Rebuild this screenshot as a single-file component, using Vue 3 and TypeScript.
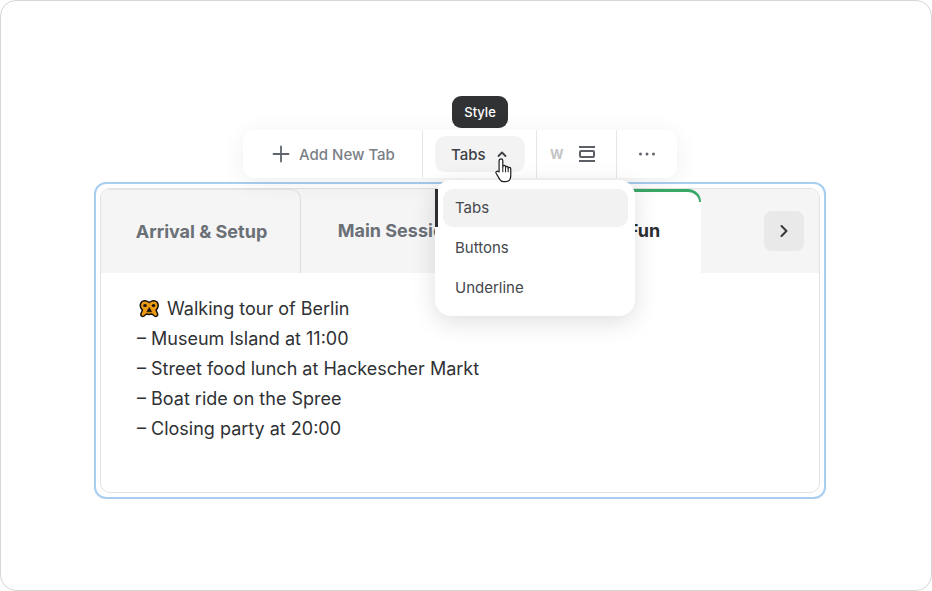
<script setup lang="ts">
const tabs = ['Arrival & Setup', 'Main Sessions', 'Games & Fun']
const lines = ['– Museum Island at 11:00', '– Street food lunch at Hackescher Markt', '– Boat ride on the Spree', '– Closing party at 20:00']
const options = ['Tabs', 'Buttons', 'Underline']
</script>

<template>
  <div class="frame">
    <section class="editor">
      <div class="panel">
        <div class="tabbar">
          <div v-for="(t, i) in tabs" :key="t" class="tab" :class="{ first: i === 0, active: i === 2 }">{{ t }}</div>
          <button class="next" aria-label="Next">
            <svg width="12" height="14" viewBox="0 0 12 14"><path d="M3.500 2 8.500 7l-5 5" fill="none" stroke="#333538" stroke-width="2" stroke-linecap="round" stroke-linejoin="round"/></svg>
          </button>
        </div>
        <div class="content">
          <p>
            <svg class="pretzel" width="21" height="19" viewBox="0 0 21 19" aria-hidden="true">
              <path d="M10.250 3.500C8 1.500 4.500.8 2.500 3 .5 5.500 1 9 3.500 11L1.800 15C1.500 17 3.500 18 5 17L7.500 15C9 15.500 11.500 15.500 13 15L15.500 17C17 18 19 17 18.700 15L17 11C19.500 9 20 5.500 18 3 16 .8 12.500 1.500 10.250 3.500Z" fill="#eb9a12" stroke="#17130c" stroke-width="1.500" stroke-linejoin="round"/>
              <ellipse cx="6" cy="6.500" rx="1.800" ry="1.600" fill="#17130c"/>
              <ellipse cx="14.500" cy="6.500" rx="1.800" ry="1.600" fill="#17130c"/>
              <path d="M10.250 8.500 7.800 12.800h4.900Z" fill="#17130c" stroke="#17130c" stroke-width=".6" stroke-linejoin="round"/>
            </svg><span>Walking tour of Berlin</span>
          </p>
          <p v-for="l in lines" :key="l">{{ l }}</p>
        </div>
      </div>
    </section>

    <div class="tooltip">Style</div>

    <div class="toolbar">
      <div class="group add">
        <svg width="18" height="18" viewBox="0 0 18 18"><path d="M9 1.500v15M1.500 9h15" fill="none" stroke="#60656c" stroke-width="1.800" stroke-linecap="round"/></svg>
        <span>Add New Tab</span>
      </div>
      <div class="group style">
        <div class="pill">
          <span>Tabs</span>
          <svg width="12" height="8" viewBox="0 0 12 8"><path d="M2.500 6 6 2.500 9.500 6" fill="none" stroke="#3d4044" stroke-width="1.800" stroke-linecap="round" stroke-linejoin="round"/></svg>
        </div>
      </div>
      <div class="group view">
        <span class="w">W</span>
        <svg width="16" height="16" viewBox="0 0 16 16" fill="none" stroke="#5c6066" stroke-width="2"><path d="M0 1h16M0 15h16"/><rect x="1" y="5" width="14" height="6" rx="1"/></svg>
      </div>
      <div class="group more">
        <svg width="18" height="4" viewBox="0 0 18 4" fill="#60656c"><circle cx="2.500" cy="2" r="1.500"/><circle cx="9" cy="2" r="1.500"/><circle cx="15.500" cy="2" r="1.500"/></svg>
      </div>
    </div>

    <div class="menu">
      <i class="marker"></i>
      <div v-for="(o, i) in options" :key="o" class="option" :class="{ selected: i === 0 }">{{ o }}</div>
    </div>

    <svg class="cursor" width="18" height="25" viewBox="0 0 19 27">
      <path d="M4.200 15V3a2 2 0 0 1 4 0V10V9.500a1.500 1.500 0 0 1 3 0v1a1.400 1.400 0 0 1 2.800 0v1a1.400 1.400 0 0 1 2.800 0V19c0 3.800-2 6.500-5.500 6.500H9c-2 0-3.200-.8-4.300-2.700L1 16.500c-.9-1.700 1.200-3.200 2.400-1.900z" fill="#fff" stroke="#1b1c1e" stroke-width="1.300" stroke-linejoin="round"/>
      <path d="M8.200 10v5.500M11.200 10.500v5M14 11.500v4" fill="none" stroke="#1b1c1e" stroke-width="1.100"/>
    </svg>
  </div>
</template>

<style>
html, body { margin: 0; background: #fff; }
</style>

<style scoped>
.frame {
  position: relative;
  box-sizing: border-box;
  width: 932px;
  height: 591px;
  padding: 181px 105px 0 93px;
  background: #fff;
  border: 1px solid #d6d6d6;
  border-radius: 16px;
  font-family: Inter, "Noto Sans", sans-serif;
  overflow: hidden;
}
.editor {
  box-sizing: border-box;
  height: 317px;
  padding: 4px;
  border: 2px solid #a8cef1;
  border-radius: 12px;
}
.panel {
  box-sizing: border-box;
  height: 100%;
  border: 1px solid #e2e2e2;
  border-radius: 10px;
  overflow: hidden;
}
.tabbar {
  display: flex;
  height: 84px;
  background: #f5f5f5;
  align-items: stretch;
}
.tab {
  position: relative;
  box-sizing: border-box;
  width: 200px;
  padding: 0 0 1px 2px;
  display: flex;
  align-items: center;
  justify-content: center;
  font-size: 18px;
  font-weight: 700;
  color: #6b7077;
  border-right: 1px solid #dcdcdc;
}
.tab.first { border-top-right-radius: 10px; border-top: 1px solid #e5e5e5; }
.tab.active {
  padding-left: 4px;
  background: #fff;
  color: #2b2d30;
  border-right: 0;
  border-top-right-radius: 14px;
  border-top-left-radius: 14px;
}
.tab.active::before {
  content: "";
  position: absolute;
  top: 0;
  left: 0;
  right: 0;
  height: 13px;
  box-sizing: border-box;
  border-top: 3px solid #3aa968;
  border-right: 2px solid #3aa968;
  border-top-right-radius: 14px;
}
.next {
  margin: 22px 0 0 63px;
  width: 40px;
  height: 40px;
  padding: 0;
  border: 0;
  border-radius: 8px;
  background: #e9e9e9;
  display: flex;
  align-items: center;
  justify-content: center;
}
.content {
  padding: 21px 37px 0 36px;
  font-size: 18px;
  line-height: 30px;
  color: #2f3134;
}
.content p { margin: 0; }
.pretzel {
  margin: 0 7px 0 2px;
  vertical-align: -3px;
}

.tooltip {
  position: absolute;
  left: 451px;
  top: 95px;
  width: 56px;
  height: 32px;
  display: flex;
  align-items: center;
  justify-content: center;
  background: #303234;
  color: #fff;
  border-radius: 9px;
  font-size: 13px;
  font-weight: 500;
}
.toolbar {
  position: absolute;
  left: 242px;
  top: 129px;
  width: 434px;
  height: 48px;
  display: flex;
  background: #fff;
  border-radius: 12px;
  box-shadow: 0 4px 24px rgba(0, 0, 0, .07);
}
.group {
  box-sizing: border-box;
  display: flex;
  align-items: center;
  border-right: 1px solid #e6e6e6;
}
.group:last-child { border-right: 0; }
.add { width: 180px; padding-left: 29px; gap: 9px; font-size: 15px; font-weight: 500; color: #7b8087; }
.style { width: 114px; padding-left: 12px; }
.pill {
  width: 90px;
  height: 36px;
  box-sizing: border-box;
  padding-left: 16px;
  display: flex;
  align-items: center;
  gap: 10px;
  background: #f3f3f3;
  border-radius: 10px;
  font-size: 15px;
  font-weight: 500;
  color: #3d4044;
}
.view { width: 80px; padding-left: 13px; gap: 15px; }
.w { font-size: 13px; font-weight: 700; color: #c4c4c4; }
.more { flex: 1; justify-content: center; }

.menu {
  position: absolute;
  left: 434px;
  top: 179px;
  box-sizing: border-box;
  width: 200px;
  height: 136px;
  padding: 9px 7px 0 8px;
  background: #fff;
  border-radius: 16px;
  box-shadow: 0 6px 24px rgba(0, 0, 0, .13);
}
.marker {
  position: absolute;
  left: 0;
  top: 9px;
  width: 3px;
  height: 38px;
  background: #2b2d30;
}
.option {
  box-sizing: border-box;
  height: 38px;
  margin-bottom: 2px;
  padding: 0 0 2px 12px;
  display: flex;
  align-items: center;
  border-radius: 10px;
  font-size: 15px;
  color: #45484c;
}
.option.selected { background: #f2f2f2; }
.cursor {
  position: absolute;
  left: 494px;
  top: 157px;
}
</style>
